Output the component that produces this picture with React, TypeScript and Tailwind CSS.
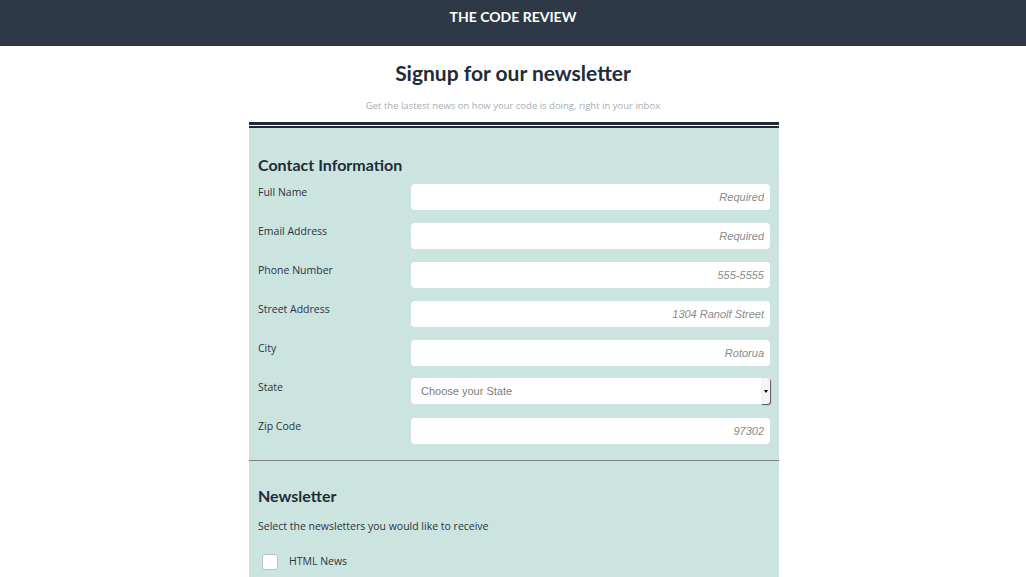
import React from 'react';

const fields = [
  { label: 'Full Name', placeholder: 'Required' },
  { label: 'Email Address', placeholder: 'Required' },
  { label: 'Phone Number', placeholder: '555-5555' },
  { label: 'Street Address', placeholder: '1304 Ranolf Street' },
  { label: 'City', placeholder: 'Rotorua' },
];

const heading = { fontFamily: 'Lato, "Noto Sans", sans-serif' };
const body = { fontFamily: '"Open Sans", "Noto Sans", sans-serif' };
const inputFont = { fontFamily: '"Liberation Sans", Arial, sans-serif' };

const Row: React.FC<{ label: string; children: React.ReactNode }> = ({ label, children }) => (
  <div className="flex items-start h-[39px]">
    <div className="w-[153px] pt-[2px] text-[10.5px] text-[#2a3340]" style={body}>
      {label}
    </div>
    <div className="flex-1">{children}</div>
  </div>
);

export default function App() {
  return (
    <div className="min-h-screen bg-white">
      <header className="h-[46px] bg-[#2e3947] flex justify-center pt-[6px]">
        <span className="text-white font-bold text-[14px]" style={heading}>
          THE CODE REVIEW
        </span>
      </header>

      <div className="flex flex-col items-center">
        <h1 className="mt-[13px] text-[21px] font-bold text-[#222c38] leading-[28px]" style={heading}>
          Signup for our newsletter
        </h1>
        <p className="mt-[12px] text-[9.5px] text-[#a8adb2]" style={body}>
          Get the lastest news on how your code is doing, right in your inbox
        </p>

        <div className="mt-[9px] w-[530px] translate-x-[1px]">
          <div className="h-[3px] bg-[#1f2a36]" />
          <div className="h-[1px] bg-white" />
          <div className="h-[2px] bg-[#1f2a36]" />

          <div className="bg-[#cce4e0]">
            <section className="px-[9px] pt-[27px] pb-[4px] border-b border-[#7a7f82]">
              <h2 className="text-[16px] font-bold text-[#222c38] leading-[20px] mb-[8px]" style={heading}>
                Contact Information
              </h2>
              {fields.map((f) => (
                <Row key={f.label} label={f.label}>
                  <input
                    className="w-full h-[26px] rounded-[4px] bg-white px-[6px] text-right text-[11px] italic placeholder:text-[#8a8a8a] outline-none"
                    style={inputFont}
                    placeholder={f.placeholder}
                  />
                </Row>
              ))}
              <Row label="State">
                <div className="relative h-[26px] rounded-[4px] bg-white flex items-center pl-[10px]" style={inputFont}>
                  <span className="text-[11px] text-[#7c7c7c]">Choose your State</span>
                  <div className="absolute right-0 top-0 h-[26px] w-[9px] bg-[#f4f4f4] rounded-r-[3px] shadow-[1px_1px_1px_#555] flex items-center justify-center">
                    <div className="w-0 h-0 border-l-[2.5px] border-r-[2.5px] border-t-[3px] border-l-transparent border-r-transparent border-t-black" />
                  </div>
                </div>
              </Row>
              <Row label="Zip Code">
                <input
                  className="w-full h-[26px] rounded-[4px] bg-white px-[6px] text-right text-[11px] italic placeholder:text-[#8a8a8a] outline-none"
                  style={inputFont}
                  placeholder="97302"
                />
              </Row>
            </section>

            <section className="px-[9px] pt-[25px] pb-[20px]">
              <h2 className="text-[16px] font-bold text-[#222c38] leading-[20px]" style={heading}>
                Newsletter
              </h2>
              <p className="mt-[13px] text-[10.5px] text-[#2a3340]" style={body}>
                Select the newsletters you would like to receive
              </p>
              <label className="mt-[19px] flex items-center gap-[11px] pl-[4px]">
                <span className="w-[16px] h-[16px] rounded-[3px] bg-white border border-[#b8c4c2]" />
                <span className="text-[10.5px] text-[#2a3340]" style={body}>HTML News</span>
              </label>
            </section>
          </div>
        </div>
      </div>
    </div>
  );
}
